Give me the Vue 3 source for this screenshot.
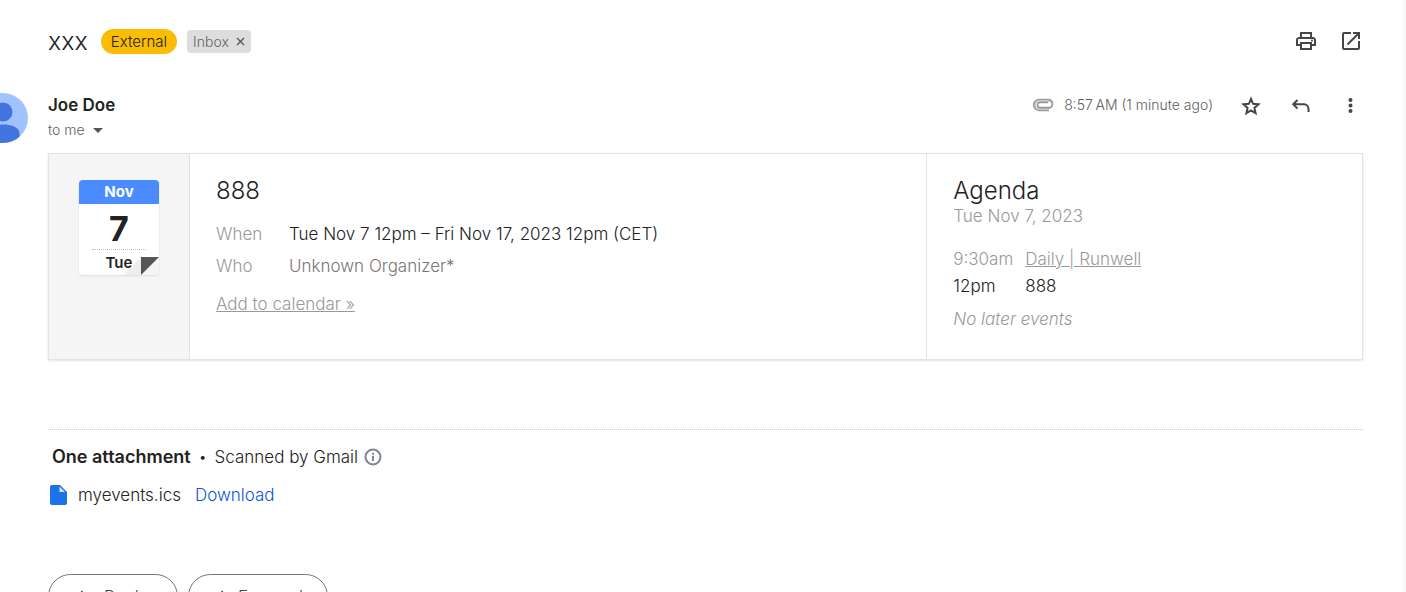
<script setup>
const details = [
  { label: 'When', value: 'Tue Nov 7 12pm – Fri Nov 17, 2023 12pm (CET)', strong: true },
  { label: 'Who', value: 'Unknown Organizer*', strong: false },
]
</script>

<template>
  <main class="page">
    <header class="subject">
      <h1>xxx</h1>
      <span class="external">External</span>
      <span class="inbox">Inbox <button type="button" class="remove" aria-label="Remove label Inbox"><svg width="9" height="9" viewBox="0 0 9 9"><path d="M1 1l7 7M8 1L1 8" /></svg></button></span>
      <div class="tools">
        <button type="button" class="icon" aria-label="Print all">
          <svg width="24" height="24" viewBox="0 0 24 24" fill="#444746"><path d="M19 8h-1V3H6v5H5c-1.660 0-3 1.340-3 3v6h4v4h12v-4h4v-6c0-1.660-1.340-3-3-3zM8 5h8v3H8V5zm8 14H8v-4h8v4zm2-4v-2H6v2H4v-4c0-.55.45-1 1-1h14c.55 0 1 .45 1 1v4h-2z" /><circle cx="18" cy="11.500" r="1" /></svg>
        </button>
        <button type="button" class="icon" aria-label="Open in new window">
          <svg width="24" height="24" viewBox="0 0 24 24" fill="#444746"><path d="M19 19H5V5h7V3H5a2 2 0 0 0-2 2v14a2 2 0 0 0 2 2h14a2 2 0 0 0 2-2v-7h-2v7zM14 3v2h3.600l-9.800 9.800 1.400 1.400L19 6.400V10h2V3h-7z" /></svg>
        </button>
      </div>
    </header>

    <section class="sender">
      <svg class="avatar" width="50" height="50" viewBox="0 0 50 50" aria-hidden="true">
        <defs><clipPath id="avatar-clip"><circle cx="25" cy="25" r="25" /></clipPath></defs>
        <g clip-path="url(#avatar-clip)">
          <rect width="50" height="50" fill="#a0c3ff" />
          <circle cx="25" cy="19" r="9.500" fill="#4374e0" />
          <path d="M8.500 50V40c0-6 9-8.500 16.500-8.500S41.500 34 41.500 40v10z" fill="#4374e0" />
        </g>
      </svg>
      <div class="who">
        <h2>Joe Doe</h2>
        <button type="button" class="to">to me <svg width="10" height="5" viewBox="0 0 10 5"><path d="M0 0h10L5 5z" fill="#555" /></svg></button>
      </div>
      <div class="meta">
        <svg class="clip" width="22" height="14" viewBox="0 0 22 14" aria-label="Has attachment"><path d="M18 10.500H6.500a3.500 3.500 0 0 1 0-7H17a3.500 3.500 0 0 1 0 7" fill="none" stroke="#bbb" stroke-width="1" /><path d="M17 12.300H7A5.300 5.300 0 0 1 7 1.700h9.500a4 4 0 0 1 0 8H8a2.600 2.600 0 0 1 0-5.200h8" fill="none" stroke="#999" stroke-width="1.700" /></svg>
        <time>8:57&#8239;AM (1 minute ago)</time>
      </div>
      <div class="actions">
        <button type="button" class="icon" aria-label="Star">
          <svg width="24" height="24" viewBox="0 0 24 24" class="line"><path d="M12 4.800l2.100 5 5.400.5-4.100 3.600 1.200 5.300-4.600-2.800-4.600 2.800 1.200-5.300-4.100-3.600 5.400-.5z" /></svg>
        </button>
        <button type="button" class="icon" aria-label="Reply">
          <svg width="24" height="24" viewBox="0 0 24 24" class="line"><path d="M8.500 6L4.200 10.300l4.300 4.300M4.500 10.300H15a4.500 4.500 0 0 1 4.500 4.500V18" /></svg>
        </button>
        <button type="button" class="icon" aria-label="More">
          <svg width="24" height="24" viewBox="0 0 24 24" fill="#444746"><circle cx="11.500" cy="6" r="2" /><circle cx="11.500" cy="11.500" r="2" /><circle cx="11.500" cy="17" r="2" /></svg>
        </button>
      </div>
    </section>

    <article class="card">
      <div class="day">
        <div class="leaf">
          <div class="month">Nov</div>
          <div class="number">7</div>
          <div class="weekday">Tue</div>
          <svg class="fold" width="36" height="18" viewBox="0 0 36 18" aria-hidden="true"><path d="M18 0v18H0z" fill="#eee" /><path d="M18 18L36 0v18z" fill="#f5f5f5" /><path d="M18 0h18L18 18z" fill="#555" /></svg>
        </div>
      </div>
      <div class="event">
        <h3>888</h3>
        <table>
          <tbody>
            <tr v-for="row in details" :key="row.label">
              <th scope="row">{{ row.label }}</th>
              <td :class="{ strong: row.strong }">{{ row.value }}</td>
            </tr>
          </tbody>
        </table>
        <a href="#calendar" class="add">Add to calendar »</a>
      </div>
      <div class="agenda">
        <h3>Agenda</h3>
        <p class="date">Tue Nov 7, 2023</p>
        <table>
          <tbody>
            <tr><th scope="row">9:30am</th><td><a href="#daily">Daily | Runwell</a></td></tr>
            <tr class="strong"><th scope="row">12pm</th><td>888</td></tr>
          </tbody>
        </table>
        <p class="none">No later events</p>
      </div>
    </article>

    <section class="attachments">
      <div class="summary">
        <strong>One attachment</strong><span class="dot">•</span><span>Scanned by Gmail</span>
        <svg width="18" height="18" viewBox="0 0 18 18" aria-hidden="true"><circle cx="9" cy="9" r="7.500" fill="none" stroke="#80868b" stroke-width="2" /><path d="M9 8v5M9 4.800v2" stroke="#80868b" stroke-width="2" /></svg>
      </div>
      <div class="file">
        <svg width="17" height="20" viewBox="0 0 17 20" aria-hidden="true"><path d="M2 0h8l7 7v11a2 2 0 0 1-2 2H2a2 2 0 0 1-2-2V2a2 2 0 0 1 2-2z" fill="#1a73e8" /><path d="M9.500 1.500V7H15z" fill="#d2e3fc" /></svg>
        <span>myevents.ics</span>
        <a href="#download">Download</a>
      </div>
    </section>

    <footer class="replies">
      <button type="button" class="reply"><svg width="20" height="20" viewBox="0 0 24 24" class="line"><path d="M9 5L4.200 10 9 15M4.500 10H15a5 5 0 0 1 5 5v4" /></svg>Reply</button>
      <button type="button" class="forward"><svg width="20" height="20" viewBox="0 0 24 24" class="line"><path d="M15 5l4.800 5-4.800 5M19.500 10H9a5 5 0 0 0-5 5v4" /></svg>Forward</button>
    </footer>
  </main>
</template>

<style>
body {
  background: #fff;
}
</style>

<style scoped>
.page {
  box-sizing: border-box;
  height: 100vh;
  overflow: hidden;
  padding: 28px 40px 0 48px;
  border-right: 3px solid #f6f8fc;
  font: 300 17px/24px Inter, "Liberation Sans", sans-serif;
  color: #222;
}
h1, h2, h3, p { margin: 0; font-weight: 300; }
button {
  font: inherit;
  color: inherit;
  border: 0;
  padding: 0;
  background: none;
}
a { color: inherit; }
svg { flex: none; }
.line {
  fill: none;
  stroke: #444746;
  stroke-width: 2;
}
.icon { display: block; width: 24px; height: 24px; }
.icon svg { display: block; }
.subject { display: flex; align-items: center; height: 26px; }
.subject h1 { font-size: 25px; line-height: 26px; }
.external {
  margin-left: 13px;
  padding: 0 10px;
  border-radius: 13px;
  background: #fbbc04;
  font-size: 15px;
  line-height: 25px;
}
.inbox {
  display: flex;
  align-items: center;
  gap: 7px;
  margin-left: 10px;
  padding: 0 6px;
  border-radius: 4px;
  background: #ddd;
  color: #666;
  font-size: 14px;
  line-height: 23px;
}
.remove { display: flex; }
.remove path { stroke: #555; stroke-width: 1.3; }
.tools { display: flex; gap: 21px; margin-left: auto; }
.sender { display: flex; align-items: flex-start; margin-top: 38px; height: 50px; }
.avatar { margin: 1px 20px 0 -70px; }
.sender h2 { font-size: 17px; font-weight: 600; line-height: 26px; }
.to {
  display: flex;
  align-items: center;
  gap: 8px;
  color: #5e5e5e;
  font-size: 14px;
}
.meta {
  display: flex;
  align-items: center;
  gap: 10px;
  margin-left: auto;
  color: #5e5e5e;
  font-size: 14px;
  line-height: 26px;
}
.actions { display: flex; gap: 26px; margin-left: 26px; padding-top: 2px; }
.card {
  display: grid;
  grid-template-columns: 141px minmax(0, 1.69fr) minmax(0, 1fr);
  margin-top: 11px;
  border: 1px solid #e3e3e3;
  box-shadow: 0 1px 2px #e3e3e3;
}
.day {
  padding: 26px 30px;
  background: #f5f5f5;
  border-right: 1px solid #e3e3e3;
}
.leaf {
  position: relative;
  height: 95px;
  border-radius: 4px;
  overflow: hidden;
  background: #fff;
  box-shadow: 0 1px 2px #ddd;
  text-align: center;
}
.month {
  background: #4a8cff;
  color: #fff;
  font-size: 15px;
  font-weight: 700;
}
.number {
  margin: 0 13px;
  padding: 7px 0 2px;
  border-bottom: 1px dotted #bbb;
  font-size: 34px;
  font-weight: 700;
  line-height: 36px;
}
.weekday { font-size: 15px; font-weight: 600; line-height: 26px; }
.fold { position: absolute; right: 0; bottom: 0; }
.event, .agenda { padding: 22px 26px 27px; }
.agenda { border-left: 1px solid #e3e3e3; }
h3 { font-size: 24px; line-height: 30px; }
table { border-collapse: collapse; }
th, td { padding: 0; text-align: left; font-weight: 300; }
.event table { margin: 12px 0 10px; line-height: 32px; }
.event th { width: 73px; color: #999; }
.event td { color: #777; }
.event .strong { color: #222; }
.add { color: #999; }
.date { color: #999; line-height: 20px; }
.agenda table { margin: 20px 0 6px; color: #999; line-height: 27px; }
.agenda th { width: 72px; }
.agenda .strong { color: #222; }
.none { color: #999; font-style: italic; line-height: 26px; }
.attachments { margin-top: 69px; padding-top: 15px; border-top: 1px dotted #ccc; }
.summary { display: flex; align-items: center; padding-left: 4px; }
.summary strong { font-size: 18px; font-weight: 600; }
.dot { margin: 0 8px; font-size: 14px; }
.summary svg { margin-left: 6px; }
.file { display: flex; align-items: center; margin-top: 14px; padding-left: 2px; }
.file span { margin-left: 11px; }
.file a { margin-left: 14px; color: #0b57d0; text-decoration: none; }
.replies { display: flex; gap: 10px; margin-top: 67px; }
.replies button {
  display: flex;
  align-items: center;
  gap: 9px;
  height: 45px;
  padding: 0 26px;
  border: 1px solid #747775;
  border-radius: 23px;
  color: #444746;
}
.replies .reply { min-width: 130px; }
.replies .forward { min-width: 140px; padding: 0 20px; }
</style>
